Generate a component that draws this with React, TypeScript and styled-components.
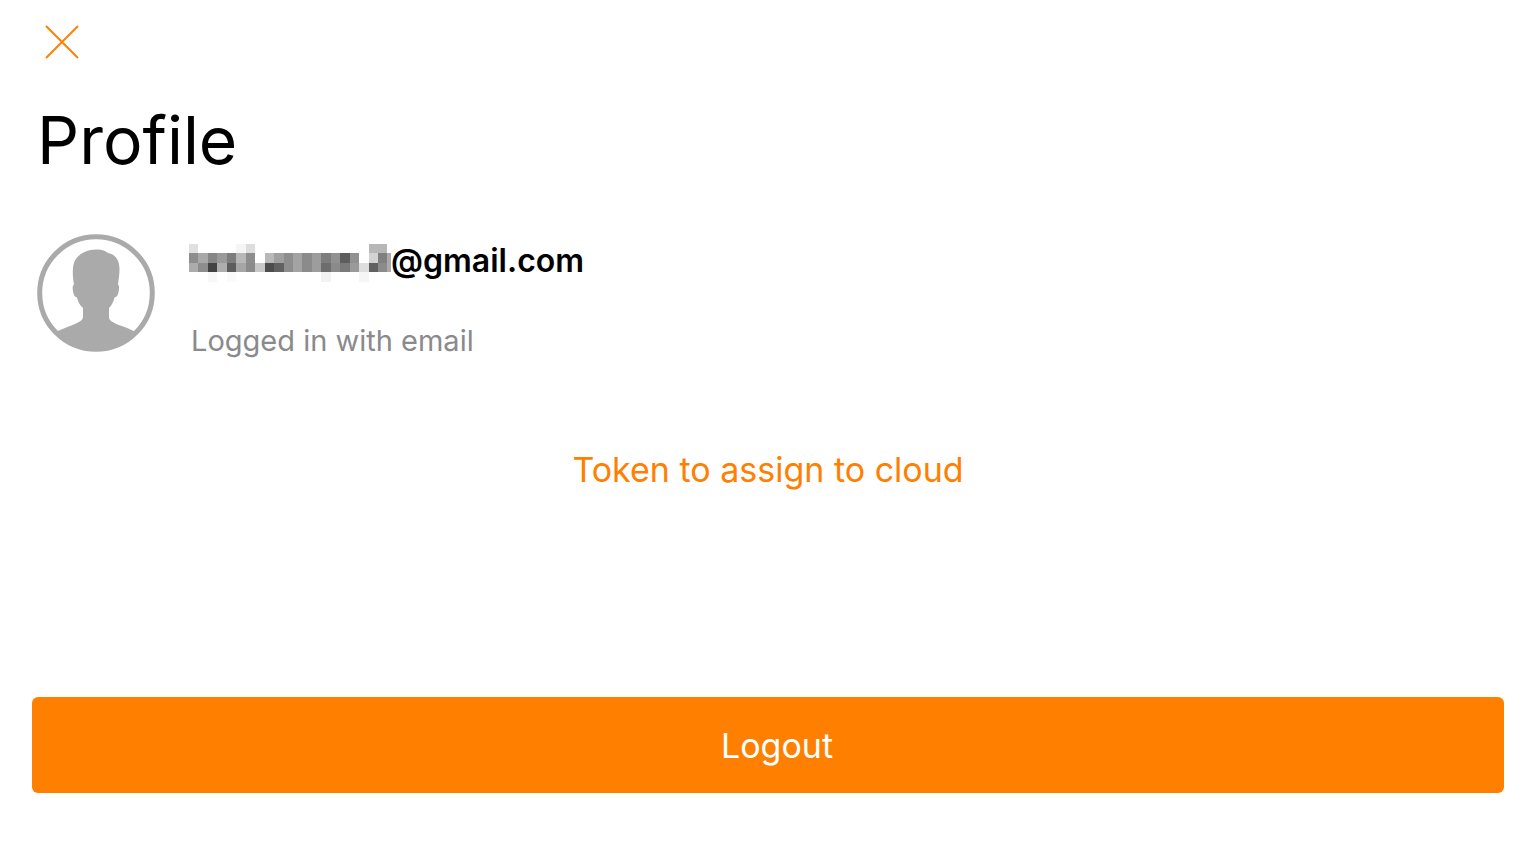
import React from "react";
import styled, { createGlobalStyle } from "styled-components";

const ORANGE = "#ff8000";

const GlobalStyle = createGlobalStyle`
  * { box-sizing: border-box; }
  body {
    margin: 0;
    background: #ffffff;
    color: #000000;
    font-family: Inter, "Liberation Sans", sans-serif;
  }
  h1, h2, p { margin: 0; font-weight: 400; }
  button { font-family: inherit; border: 0; cursor: pointer; }
`;

const Page = styled.main`
  display: flex;
  flex-direction: column;
  min-height: 100vh;
  padding: 20px 32px 69px;
`;

const CloseButton = styled.button`
  display: flex;
  align-self: flex-start;
  margin-left: 8px;
  padding: 0;
  background: none;
  color: ${ORANGE};
`;

const Title = styled.h1`
  margin: 34px 0 0 5px;
  font-size: 66px;
  line-height: 84px;
`;

const Account = styled.section`
  display: flex;
  margin: 52px 0 0 5px;
  gap: 34px;
`;

const AccountText = styled.div`
  display: flex;
  flex-direction: column;
  gap: 41px;
  padding-top: 10px;
`;

const Email = styled.h2`
  display: flex;
  align-items: flex-start;
  font-size: 32px;
  font-weight: 600;
  line-height: 34px;
`;

const LoginMethod = styled.p`
  padding-left: 2px;
  color: #8a8a8d;
  font-size: 29px;
  line-height: 36px;
`;

const TokenButton = styled.button`
  align-self: center;
  margin-top: 89px;
  padding: 0;
  background: none;
  color: ${ORANGE};
  font-size: 34px;
  line-height: 44px;
`;

const LogoutButton = styled.button`
  height: 96px;
  margin-top: auto;
  padding: 2px 0 0 18px;
  border-radius: 6px;
  background: ${ORANGE};
  color: #ffffff;
  font-size: 34px;
  line-height: 44px;
`;

const CloseIcon = () => (
  <svg width="44" height="44" viewBox="0 0 44 44" fill="none" stroke="currentColor" strokeWidth="1.9" aria-hidden="true">
    <path d="M6 6 38 38M38 6 6 38" />
  </svg>
);

const Avatar = () => (
  <svg width="118" height="118" viewBox="0 0 118 118" role="img" aria-label="Profile picture">
    <circle cx="59" cy="59" r="56.3" fill="none" stroke="#aaaaaa" strokeWidth="5" />
    <path
      fill="#aaaaaa"
      d="M59 15.5C64 15 68 16.5 71 19C78 20 82.500 26 82.500 35C82.500 41 81.500 46 81 50.500C82.500 51.500 82.300 55 81.500 58C81 61 80 63 77.500 63.500C76.500 68 74.500 71.500 72 74V84C73.500 88 79 90 86 92.500C91 94.200 96 96.500 99.500 98.500A57 57 0 0 1 18.500 98.500C23 95.500 28 94 33 92C40 89 45.500 87.500 46 83V74C43 71.500 41 68 40 63.500C37.500 63 36.500 60.500 36 57C35.500 54 35.500 51.500 37 50.500C36 45 35.500 39 36 34C37 22 47 16 59 15.500Z"
    />
  </svg>
);

const CELL = 9.45;

// Grey level of every cell in the redacted part of the address; 255 is blank.
const MOSAIC = [
  [224, 255, 255, 255, 255, 245, 221, 255, 255, 255, 255, 255, 255, 255, 255, 255, 255, 255, 255, 183, 183, 255],
  [141, 168, 134, 154, 125, 184, 141, 255, 184, 160, 142, 163, 139, 157, 125, 145, 93, 145, 255, 210, 128, 170],
  [172, 141, 66, 174, 93, 166, 139, 200, 77, 97, 141, 163, 139, 157, 109, 138, 122, 154, 222, 97, 139, 170],
  [255, 255, 248, 255, 250, 255, 255, 255, 255, 255, 255, 255, 255, 255, 242, 255, 255, 255, 246, 255, 255, 255],
];

const RedactedName = () => (
  <svg width="202" height="38" viewBox="0 0 202 38" shapeRendering="crispEdges" role="img" aria-label="Hidden name">
    {MOSAIC.map((row, y) =>
      row.map((level, x) =>
        level === 255 ? null : (
          <rect key={`${x}-${y}`} x={x * CELL} y={y * CELL} width={CELL} height={CELL} fill={`rgb(${level},${level},${level})`} />
        ),
      ),
    )}
  </svg>
);

export default function App() {
  return (
    <>
      <GlobalStyle />
      <Page>
        <CloseButton type="button" aria-label="Close">
          <CloseIcon />
        </CloseButton>
        <Title>Profile</Title>
        <Account>
          <Avatar />
          <AccountText>
            <Email>
              <RedactedName />
              <span>@gmail.com</span>
            </Email>
            <LoginMethod>Logged in with email</LoginMethod>
          </AccountText>
        </Account>
        <TokenButton type="button">Token to assign to cloud</TokenButton>
        <LogoutButton type="button">Logout</LogoutButton>
      </Page>
    </>
  );
}
